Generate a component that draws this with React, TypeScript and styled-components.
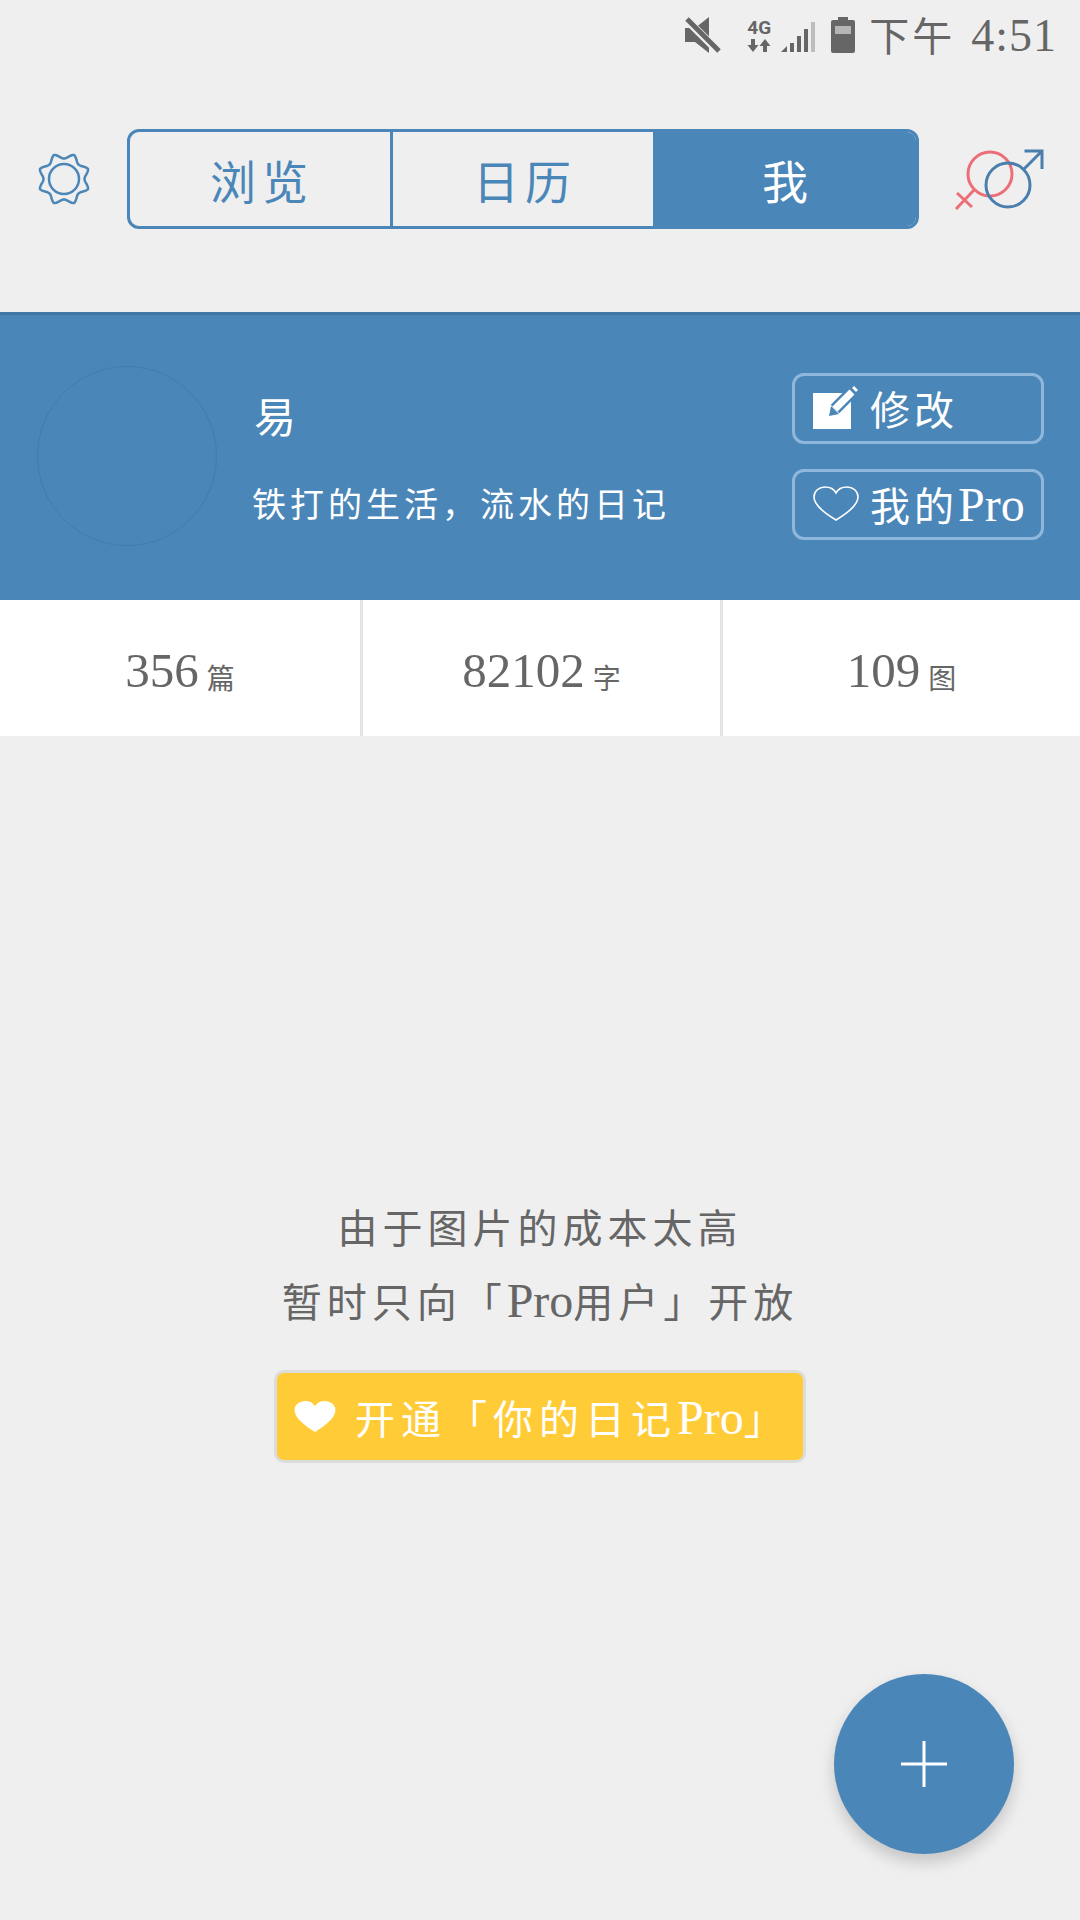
import styled, { createGlobalStyle } from "styled-components";

const BLUE = "#4a86b8";
const GREY = "#666666";
const FONT = `"Liberation Serif", "Noto Sans CJK SC", serif`;

const GlobalStyle = createGlobalStyle`
    html, body {
        margin: 0;
        padding: 0;
        background: #efefef;
    }
    * {
        box-sizing: border-box;
    }
`;

// scalloped outline of the settings gear, tips are narrow and valleys round
function gearPath() {
    const points: string[] = [];
    for (let i = 0; i < 320; i++) {
        const a = (i / 320) * Math.PI * 2;
        const wave = 1 - Math.pow(Math.abs(Math.sin(4 * (a - Math.PI / 8))), 1.4);
        const r = 20.5 + 5.5 * wave;
        points.push(`${(27 + r * Math.cos(a)).toFixed(2)} ${(27 + r * Math.sin(a)).toFixed(2)}`);
    }
    return `M${points.join("L")}Z`;
}

function App() {
    return (
        <Page>
            <GlobalStyle />
            <StatusBar>
                <svg width="36" height="36" viewBox="0 0 36 36">
                    <path d="M0 11h10L24 0v36L10 25H0z" fill={GREY} />
                    <path d="M2 3l31 31" stroke="#efefef" strokeWidth="8" />
                    <path d="M2 2l32 32" stroke={GREY} strokeWidth="5" />
                </svg>
                <NetworkBlock>
                    <NetworkLabel>4G</NetworkLabel>
                    <svg width="24" height="15" viewBox="0 0 24 15">
                        <path d="M4 1h4v6h3.500L6 14 .5 7H4z" fill={GREY} />
                        <path d="M16 14h4V8h3.500L18 1l-5.500 7H16z" fill={GREY} />
                    </svg>
                </NetworkBlock>
                <svg width="36" height="33" viewBox="0 0 36 33">
                    <path d="M0 33l6-6v6z" fill={GREY} />
                    <path d="M9 24h4v9H9zM16 17h4v16h-4zM23 10h4v23h-4z" fill={GREY} />
                    <path d="M30 3h4v30h-4z" fill="#bdbdbd" />
                </svg>
                <svg width="24" height="36" viewBox="0 0 24 36">
                    <path d="M7 0h10v3h5q2 0 2 2v29q0 2-2 2H2q-2 0-2-2V5q0-2 2-2h5z" fill={GREY} />
                    <path d="M4 9h16v8H4z" fill="#b5b5b5" />
                </svg>
                <Clock>
                    下午 <ClockTime>4:51</ClockTime>
                </Clock>
            </StatusBar>

            <Header>
                <svg width="54" height="54" viewBox="0 0 54 54" fill="none" stroke={BLUE} strokeWidth="2.500" strokeLinejoin="round">
                    <path d={gearPath()} />
                    <circle cx="27" cy="27" r="15" />
                </svg>
                <Tabs>
                    <Tab>浏览</Tab>
                    <Tab>日历</Tab>
                    <Tab $active>我</Tab>
                </Tabs>
                <svg width="92" height="62" viewBox="0 0 92 62" fill="none" strokeWidth="3">
                    <g stroke="#ec6f78">
                        <circle cx="36" cy="26" r="22" />
                        <path d="M20 42L2 61M3 45l15 14" />
                    </g>
                    <g stroke="#4a7fad">
                        <circle cx="54" cy="37" r="22" />
                        <path d="M70 21L88 3M70.500 3H88v18" />
                    </g>
                </svg>
            </Header>

            <Profile>
                <Avatar />
                <ProfileText>
                    <Name>易</Name>
                    <Motto>{"铁打的生活\uFF0C流水的日记"}</Motto>
                </ProfileText>
                <ProfileActions>
                    <OutlineButton>
                        <svg width="46" height="46" viewBox="0 0 46 46">
                            <path d="M0 8h38v36H0z" fill="#fff" />
                            <path d="M22 24L39 7" stroke={BLUE} strokeWidth="12" />
                            <path d="M22 24L39 7" stroke="#fff" strokeWidth="7" />
                            <path d="M16 31l2-10 8 8z" fill={BLUE} />
                            <path d="M41 1l4 4-2 2-4-4z" fill="#fff" />
                        </svg>
                        修改
                    </OutlineButton>
                    <OutlineButton>
                        <svg width="46" height="36" viewBox="0 0 46 36" fill="none" stroke="#fff" strokeWidth="1.600">
                            <path d="M23 34C13 28 1 20 1 11 1 5 6 1 12 1c5 0 9 2 11 6 2-4 6-6 11-6 6 0 11 4 11 10 0 9-12 17-22 23z" />
                        </svg>
                        <span>
                            我的<Latin>Pro</Latin>
                        </span>
                    </OutlineButton>
                </ProfileActions>
            </Profile>

            <Stats>
                <StatCell>
                    <StatValue>356</StatValue>
                    <StatUnit>篇</StatUnit>
                </StatCell>
                <StatCell>
                    <StatValue>82102</StatValue>
                    <StatUnit>字</StatUnit>
                </StatCell>
                <StatCell>
                    <StatValue>109</StatValue>
                    <StatUnit>图</StatUnit>
                </StatCell>
            </Stats>

            <Notice>
                <NoticeLine>由于图片的成本太高</NoticeLine>
                <NoticeLine>
                    暂时只向「<Latin>Pro</Latin>用户」开放
                </NoticeLine>
                <UpgradeButton>
                    <svg width="42" height="32" viewBox="0 0 46 36">
                        <path d="M23 35C13 28 0 20 0 10 0 4 6 0 12 0c5 0 9 2 11 6 2-4 6-6 11-6 6 0 12 4 12 10 0 10-13 18-23 25z" fill="#fff" />
                    </svg>
                    <span>
                        开通「你的日记<Latin>Pro</Latin>」
                    </span>
                </UpgradeButton>
            </Notice>

            <AddButton>
                <svg width="46" height="46" viewBox="0 0 46 46">
                    <path d="M21.500 0h3v46h-3zM0 21.500h46v3H0z" fill="#fff" />
                </svg>
            </AddButton>
        </Page>
    );
}

const Page = styled.div`
    position: relative;
    width: 1080px;
    height: 1920px;
    overflow: hidden;
    background: #efefef;
    font-family: ${FONT};
`;

const Latin = styled.span`
    font-size: 48px;
    line-height: 1;
    letter-spacing: 0;
`;

const StatusBar = styled.div`
    display: flex;
    align-items: center;
    justify-content: flex-end;
    height: 70px;
    padding: 0 23px 0 0;

    & > svg:first-child {
        margin-right: 25px;
    }
    & > svg:nth-child(3) {
        margin: 0 14px 0 9px;
    }
`;

const NetworkBlock = styled.div`
    display: flex;
    flex-direction: column;
    align-items: center;
    width: 26px;
`;

const NetworkLabel = styled.span`
    font-family: "Roboto", sans-serif;
    font-size: 19px;
    font-weight: 700;
    line-height: 20px;
    color: ${GREY};
`;

const Clock = styled.span`
    margin-left: 14px;
    padding-top: 4px;
    font-size: 40px;
    line-height: 66px;
    letter-spacing: 3px;
    color: ${GREY};
    white-space: nowrap;
`;

const ClockTime = styled.span`
    margin-left: 3px;
    font-size: 46px;
    letter-spacing: 1px;
`;

const Header = styled.header`
    display: flex;
    align-items: center;
    height: 242px;
    padding: 0 0 24px 37px;
`;

const Tabs = styled.nav`
    display: flex;
    width: 792px;
    height: 100px;
    margin: 0 35px 0 36px;
    border: 3px solid ${BLUE};
    border-radius: 12px;
    overflow: hidden;
`;

const Tab = styled.div<{ $active?: boolean }>`
    flex: 1;
    display: flex;
    align-items: center;
    justify-content: center;
    padding-left: 4px;
    font-size: 46px;
    letter-spacing: 6px;
    color: ${(p) => (p.$active ? "#fff" : BLUE)};
    background: ${(p) => (p.$active ? BLUE : "transparent")};

    & + & {
        border-left: 3px solid ${BLUE};
    }
`;

const Profile = styled.section`
    display: flex;
    align-items: center;
    height: 288px;
    padding: 0 36px 0 37px;
    background: ${BLUE};
    box-shadow: inset 0 3px 0 #3f76a3;
`;

const Avatar = styled.div`
    flex: none;
    width: 180px;
    height: 180px;
    border-radius: 50%;
    border: 1px solid #437cab;
`;

const ProfileText = styled.div`
    display: flex;
    flex-direction: column;
    gap: 36px;
    margin-left: 35px;
    padding-top: 10px;
    color: #fff;
`;

const Name = styled.div`
    font-size: 42px;
    line-height: 54px;
    padding-left: 2px;
`;

const Motto = styled.div`
    font-size: 34px;
    line-height: 48px;
    letter-spacing: 4px;
    white-space: nowrap;
`;

const ProfileActions = styled.div`
    display: flex;
    flex-direction: column;
    gap: 25px;
    margin-left: auto;
`;

const OutlineButton = styled.button`
    display: flex;
    align-items: center;
    gap: 11px;
    width: 252px;
    height: 71px;
    padding: 0 0 0 18px;
    background: transparent;
    border: 3px solid #8fb7dc;
    border-radius: 12px;
    font-family: ${FONT};
    font-size: 40px;
    letter-spacing: 4px;
    color: #fff;
    white-space: nowrap;
`;

const Stats = styled.section`
    display: grid;
    grid-template-columns: repeat(3, 1fr);
    height: 136px;
    background: #fff;
`;

const StatCell = styled.div`
    display: flex;
    align-items: baseline;
    justify-content: center;
    gap: 8px;
    padding-top: 42px;
    color: ${GREY};

    & + & {
        border-left: 3px solid #e5e5e5;
    }
`;

const StatValue = styled.span`
    font-size: 49px;
    line-height: 58px;
`;

const StatUnit = styled.span`
    font-size: 28px;
    transform: translateY(2px);
`;

const Notice = styled.section`
    display: flex;
    flex-direction: column;
    align-items: center;
    padding-top: 457px;
    color: ${GREY};
`;

const NoticeLine = styled.p`
    margin: 0;
    font-size: 40px;
    line-height: 74px;
    letter-spacing: 5px;
    white-space: nowrap;
`;

const UpgradeButton = styled.button`
    display: flex;
    align-items: center;
    gap: 19px;
    width: 532px;
    height: 93px;
    margin-top: 29px;
    padding: 0 0 0 17px;
    background: #ffcc38;
    border: 3px solid #dcdcdc;
    border-radius: 10px;
    font-family: ${FONT};
    font-size: 40px;
    letter-spacing: 6px;
    color: #fff;
    white-space: nowrap;
`;

const AddButton = styled.button`
    position: absolute;
    left: 834px;
    top: 1674px;
    display: flex;
    align-items: center;
    justify-content: center;
    width: 180px;
    height: 180px;
    padding: 0;
    border: none;
    border-radius: 50%;
    background: ${BLUE};
    box-shadow: 0 8px 16px rgba(0, 0, 0, 0.18);
`;

export default App;
